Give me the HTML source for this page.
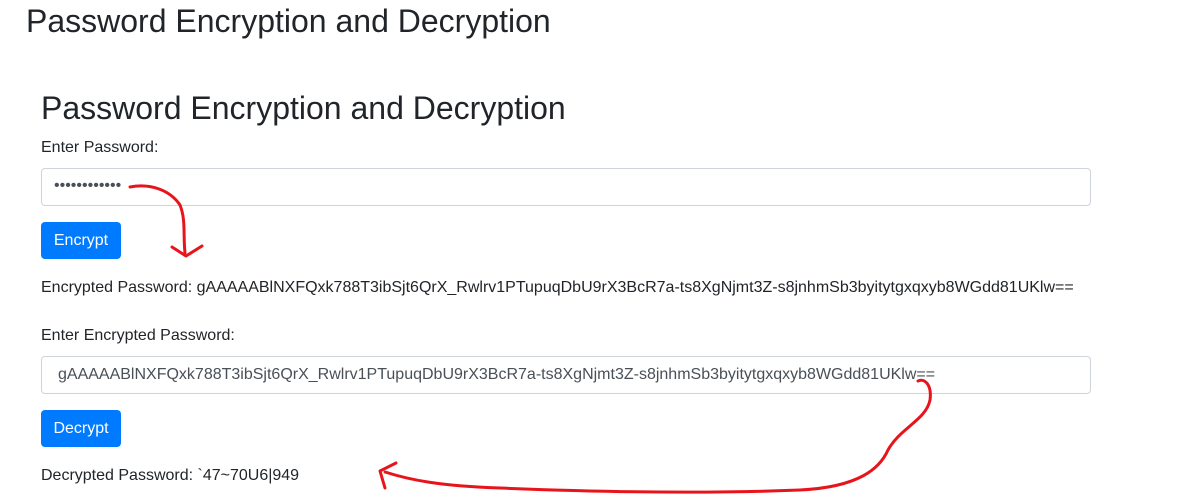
<!DOCTYPE html>
<html><head><meta charset="utf-8"><style>
body{margin:0;background:#fff;font-family:"Liberation Sans",Arial,sans-serif;color:#212529;width:1186px;height:499px;overflow:hidden;position:relative}
.a{position:absolute;white-space:nowrap}
h1{position:absolute;margin:0;font-weight:400;font-size:32px;line-height:36px}
.lbl{font-size:16px}
.inp{position:absolute;left:41px;width:1050px;height:38px;border:1px solid #ced4da;border-radius:4px;box-sizing:border-box;background:#fff}
.btn{position:absolute;left:41px;width:80px;height:37px;background:#007bff;color:#fff;border-radius:4px;font-size:16px;line-height:37px;text-align:center}
</style></head><body>
<h1 style="left:26px;top:3px">Password Encryption and Decryption</h1>
<h1 style="left:41px;top:90px">Password Encryption and Decryption</h1>
<div class="a lbl" style="left:41px;top:139px">Enter Password:</div>
<div class="inp" style="top:168px"><span class="a" style="left:12px;top:8px;font-size:16px;letter-spacing:0px;color:#495057">••••••••••••</span></div>
<div class="btn" style="top:222px">Encrypt</div>
<div class="a lbl" style="left:41px;top:279px">Encrypted Password: gAAAAABlNXFQxk788T3ibSjt6QrX_Rwlrv1PTupuqDbU9rX3BcR7a-ts8XgNjmt3Z-s8jnhmSb3byitytgxqxyb8WGdd81UKlw==</div>
<div class="a lbl" style="left:41px;top:327px">Enter Encrypted Password:</div>
<div class="inp" style="top:356px"><span class="a" style="left:16px;top:9px;font-size:16px;color:#495057">gAAAAABlNXFQxk788T3ibSjt6QrX_Rwlrv1PTupuqDbU9rX3BcR7a-ts8XgNjmt3Z-s8jnhmSb3byitytgxqxyb8WGdd81UKlw==</span></div>
<div class="btn" style="top:410px">Decrypt</div>
<div class="a lbl" style="left:41px;top:467px">Decrypted Password: `47~70U6|949</div>
<svg class="a" style="left:0;top:0" width="1186" height="499">
<g fill="none" stroke="#e8141c" stroke-width="3" stroke-linecap="round" stroke-linejoin="round">
<path d="M130 187 C150 183 170 190 180 205 C186 220 183 235 185 253"/>
<path d="M172 247 L186 256 L202 246"/>
<path d="M918 381 C925 378 932 385 930 400 C926 420 900 428 888 450 C880 468 860 487 800 490 C700 494 600 492 500 488 C440 486 410 480 385 472"/>
<path d="M396 463 L380 471 L385 488"/>
</g></svg>
</body></html>
